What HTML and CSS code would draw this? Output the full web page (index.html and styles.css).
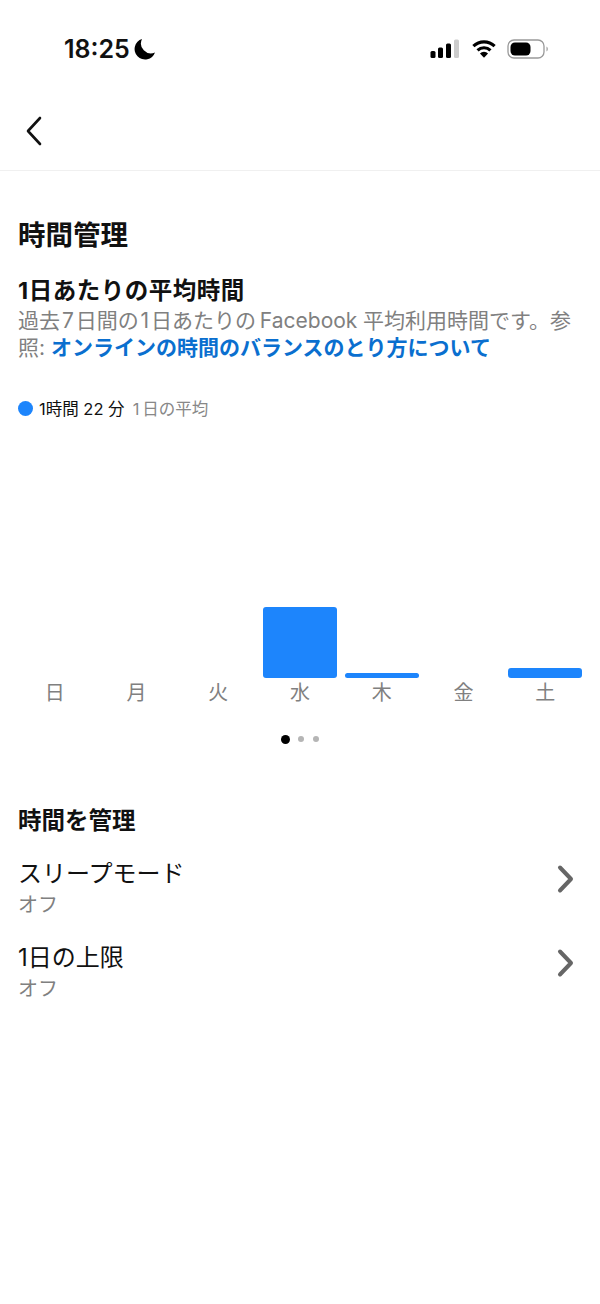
FILE: index.html

```html
<!DOCTYPE html>
<html lang="ja">
<head>
  <meta charset="UTF-8" />
  <title>時間管理</title>
  <link rel="stylesheet" href="styles.css">
</head>
<body>
  <div class="status-bar">
    <div class="status-left">
      <span class="clock">18:25</span>
      <svg class="moon" width="22" height="22" viewBox="0 0 22 22"><path fill="#000" d="M8 1 A10.5 10.5 0 1 0 21 14.5 A10 10 0 0 1 8 1 Z"/></svg>
    </div>
    <div class="status-right">
      <svg width="30" height="20" viewBox="0 0 30 20">
        <rect x="0.5" y="12" width="5" height="7" rx="1.5" fill="#000"/>
        <rect x="8" y="8.5" width="5" height="10.5" rx="1.5" fill="#000"/>
        <rect x="16" y="4.5" width="5" height="14.5" rx="1.5" fill="#000"/>
        <rect x="24" y="0.5" width="5" height="18.5" rx="1.5" fill="#ccc"/>
      </svg>
      <svg width="24" height="20" viewBox="0 0 26 20" fill="none" stroke="#000" stroke-width="3.4">
        <path d="M1.5 7 A16.5 16.5 0 0 1 24.5 7"/>
        <path d="M6 11.5 A10 10 0 0 1 20 11.5"/>
        <path d="M13 19.5 L8.6 15 A6 6 0 0 1 17.4 15 Z" fill="#000" stroke="none"/>
      </svg>
      <svg width="42" height="20" viewBox="0 0 42 20">
        <rect x="1" y="1" width="36" height="18" rx="6" fill="none" stroke="#999" stroke-width="1.3"/>
        <rect x="3.5" y="3.5" width="20" height="13" rx="4.5" fill="#000"/>
        <path d="M39.5 7.5 A3 3 0 0 1 39.5 12.5 Z" fill="#999"/>
      </svg>
    </div>
  </div>

  <div class="nav">
    <svg width="20" height="30" viewBox="0 0 20 30" fill="none" stroke="#111" stroke-width="2.6" stroke-linecap="round" stroke-linejoin="round"><path d="M15 2 L3 15 L15 28"/></svg>
  </div>

  <div class="content">
    <h1>時間管理</h1>
    <h2>1日あたりの平均時間</h2>
    <p class="desc">過去&#8202;7&#8202;日間の&#8202;1&#8202;日あたりの&#8201;Facebook&#8201;&#8202;平均利用時間です。参照: <a href="#">オンラインの時間のバランスのとり方について</a></p>

    <div class="legend">
      <span class="legend-dot"></span>
      <span class="legend-value">1時間 22 分</span>
      <span class="legend-note">1&#8201;日の平均</span>
    </div>

    <div class="chart">
      <div class="day"><div class="bar-slot"></div><span>日</span></div>
      <div class="day"><div class="bar-slot"></div><span>月</span></div>
      <div class="day"><div class="bar-slot"></div><span>火</span></div>
      <div class="day"><div class="bar-slot"><div class="bar" style="height:71px"></div></div><span>水</span></div>
      <div class="day"><div class="bar-slot"><div class="bar" style="height:5px"></div></div><span>木</span></div>
      <div class="day"><div class="bar-slot"></div><span>金</span></div>
      <div class="day"><div class="bar-slot"><div class="bar" style="height:10px"></div></div><span>土</span></div>
    </div>

    <div class="pager">
      <span class="pager-dot active"></span>
      <span class="pager-dot"></span>
      <span class="pager-dot"></span>
    </div>

    <h3>時間を管理</h3>
    <div class="row">
      <div>
        <div class="row-title">スリープモード</div>
        <div class="row-sub">オフ</div>
      </div>
      <svg class="chevron" width="20" height="30" viewBox="0 0 20 30" fill="none" stroke="#666" stroke-width="4" stroke-linecap="round" stroke-linejoin="round"><path d="M4 3.5 L15 15 L4 26.5"/></svg>
    </div>
    <div class="row">
      <div>
        <div class="row-title">1日の上限</div>
        <div class="row-sub">オフ</div>
      </div>
      <svg class="chevron" width="20" height="30" viewBox="0 0 20 30" fill="none" stroke="#666" stroke-width="4" stroke-linecap="round" stroke-linejoin="round"><path d="M4 3.5 L15 15 L4 26.5"/></svg>
    </div>
  </div>
</body>
</html>
```

FILE: styles.css

```css
* {
  box-sizing: border-box;
}
body {
  margin: 0;
  background: #fff;
  color: #111;
  font-family: "Inter", "Noto Sans CJK JP", sans-serif;
}
.status-bar {
  height: 96px;
  padding: 35px 51px 0 64px;
  display: flex;
  justify-content: space-between;
  align-items: flex-start;
}
.status-left {
  display: flex;
  align-items: center;
  gap: 4px;
  height: 28px;
}
.clock {
  font-size: 25px;
  font-weight: 600;
  color: #111;
}
.status-right {
  display: flex;
  align-items: center;
  gap: 11.5px;
  height: 28px;
}
.nav {
  height: 75px;
  padding: 20px 0 0 25px;
  border-bottom: 1px solid #f0f0f0;
}
.nav svg {
  display: block;
}
.content {
  padding: 45px 18px 0;
}
h1 {
  margin: 0;
  font-size: 27.5px;
  line-height: 38px;
  font-weight: 700;
}
h2 {
  margin: 21px 0 0;
  font-size: 23.5px;
  line-height: 32px;
  font-weight: 700;
  letter-spacing: 0.5px;
}
.desc {
  margin: 0;
  font-size: 21px;
  line-height: 27px;
  color: #808080;
}
.desc a {
  color: #0a6fcf;
  font-weight: 700;
  text-decoration: none;
}
.legend {
  margin-top: 35px;
  display: flex;
  align-items: center;
  height: 24px;
  font-size: 16.5px;
}
.legend-dot {
  width: 15px;
  height: 15px;
  border-radius: 50%;
  background: #1d85fc;
  margin-right: 6px;
}
.legend-note {
  color: #888;
  margin-left: 8px;
}
.chart {
  margin-top: 182px;
  display: grid;
  grid-template-columns: repeat(7, 1fr);
  column-gap: 8px;
}
.day {
  text-align: center;
  font-size: 20px;
  line-height: 30px;
  color: #808080;
}
.bar-slot {
  height: 76px;
  display: flex;
  align-items: flex-end;
}
.bar {
  width: 100%;
  background: #1d85fc;
  border-radius: 3px;
}
.pager {
  margin-top: 26px;
  display: flex;
  justify-content: center;
  align-items: center;
  gap: 9px;
  height: 10px;
}
.pager-dot {
  width: 6px;
  height: 6px;
  border-radius: 50%;
  background: #b5b5b5;
}
.pager-dot.active {
  width: 9px;
  height: 9px;
  margin-right: -1.5px;
  background: #000;
}
h3 {
  margin: 60px 0 20px;
  font-size: 23.5px;
  line-height: 34px;
  font-weight: 700;
}
.row {
  display: flex;
  justify-content: space-between;
  align-items: flex-start;
  height: 84px;
  padding-right: 6px;
}
.chevron {
  margin-top: 6px;
}
.row-title {
  font-size: 24px;
  line-height: 32px;
}
.row-sub {
  font-size: 20px;
  line-height: 30px;
  color: #808080;
}
```
